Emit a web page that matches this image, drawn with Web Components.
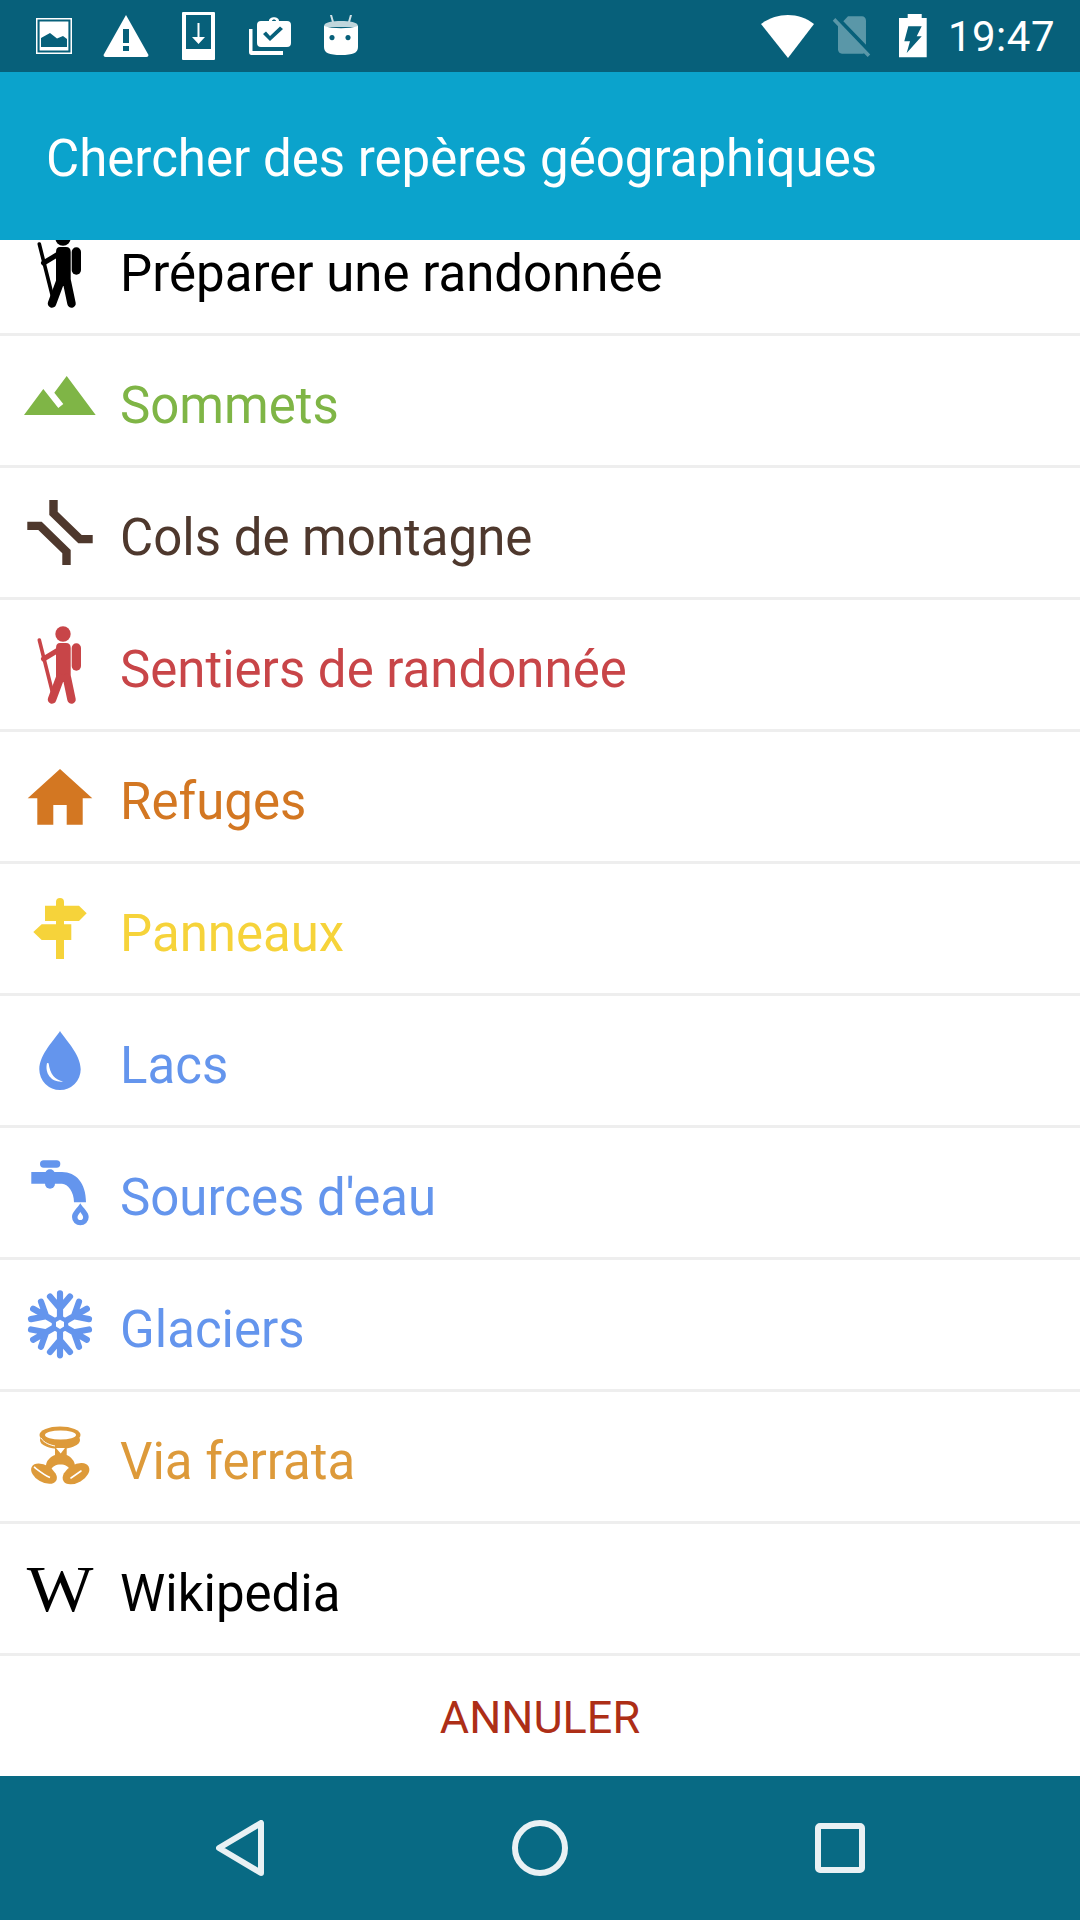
<!DOCTYPE html>
<html>
<head>
<meta charset="utf-8">
<title>Chercher des repères géographiques</title>
<style>
  html, body { margin: 0; padding: 0; }
  body { width: 1080px; height: 1920px; overflow: hidden; background: #fff; font-family: Roboto, "Liberation Sans", sans-serif; }
  phone-screen { height: 1920px; }
</style>
</head>
<body>
<script>
const hiker = `
  <circle cx="63" cy="34" r="7.7"/>
  <path d="M39.3 40 L52.7 93.3" stroke="currentColor" stroke-width="3.6" stroke-linecap="round" fill="none"/>
  <path d="M60 49 L43.5 59" stroke="currentColor" stroke-width="5" stroke-linecap="round" fill="none"/>
  <path d="M60 43 H66 Q70.7 43 70.7 48 V82 H56 V48 Q56 43 60 43 Z"/>
  <path d="M60 78 L52 99.5 M67 78 L71.5 99.5" stroke="currentColor" stroke-width="8.5" stroke-linecap="round" fill="none"/>
  <rect x="71.7" y="43.3" width="9.3" height="27.4" rx="4.6"/>`;

const arm = `<g><path d="M0 0 V-31 M-10 -27.7 L0 -16 L10 -27.7" stroke="currentColor" stroke-width="6.2" stroke-linecap="round" stroke-linejoin="round" fill="none"/></g>`;

const ICONS = {
  hiker,
  peak: `<path d="M24 79 L43.3 53 L58.3 72 L63.3 68 L54.3 56.7 L66.7 40 L95.7 79 Z"/>`,
  pass: `<path d="M49.3 32 H57.7 V43.7 L81.7 67 H92.7 V75.3 H78.3 L49.3 47 Z"/>
         <path d="M27.3 53.7 H41.7 L70.7 82 V97 H62.3 V85.3 L38.3 62 H27.3 Z"/>`,
  hut: `<path d="M60 37 L92.3 66.3 H82.7 V92.7 H66.7 V73 H53.3 V92.7 H37.3 V66.3 H27.7 Z"/>`,
  sign: `<path d="M56 38 A4 4 0 0 1 64 38 V41.7 H79 L86.7 49.3 L79 57 H64 V60.3 H71.3 V76 H64 V95 H56 V76 H41.7 L33.3 68 L41.7 60.3 H56 V57 H45 V41.7 H56 Z"/>`,
  drop: `<path d="M60 35 C64 42 80.7 58 80.7 73.3 A20.7 20.7 0 0 1 39.3 73.3 C39.3 58 56 42 60 35 Z"/>
         <path fill="#fff" d="M47 67 C44.5 78 52 87 63.5 85.5 C55 84 50 78 48.6 67.2 Z"/>`,
  tap: `<rect x="40" y="32.3" width="20.3" height="7.4" rx="3.7"/>
        <rect x="45" y="41.3" width="10" height="19.4" rx="5"/>
        <path d="M31.3 44 H62 C76 44 86 55 86 74.3 H74 C74 64 68 55.7 62 55.7 H31.3 Z"/>
        <path fill-rule="evenodd" d="M80.3 75.3 C83 80 88.7 84 88.7 89 A8.3 8.3 0 0 1 72 89 C72 84 77.6 80 80.3 75.3 Z M80.3 84 C79 86 77.5 87.5 77.5 89.3 A2.8 2.8 0 0 0 83.1 89.3 C83.1 87.5 81.6 86 80.3 84 Z"/>`,
  flake: `<g transform="translate(60 64.3)">${arm}
          <g transform="rotate(60)">${arm}</g><g transform="rotate(120)">${arm}</g>
          <g transform="rotate(180)">${arm}</g><g transform="rotate(240)">${arm}</g><g transform="rotate(300)">${arm}</g>
          <path d="M0 -9.5 L8.2 -4.75 V4.75 L0 9.5 L-8.2 4.75 V-4.75 Z"/>
          <path fill="#fff" d="M0 -4.6 L4 -2.3 V2.3 L0 4.6 L-4 2.3 V-2.3 Z"/></g>`,
  harness: `<ellipse cx="60" cy="43" rx="20.5" ry="8.500"/><ellipse cx="60" cy="48" rx="20" ry="9"/>
    <ellipse cx="60.500" cy="43" rx="15.500" ry="4.500" fill="#fff"/>
    <path d="M41 46 C44 51 50 53 55 54" stroke="#fff" stroke-width="1" fill="none"/>
    <path d="M55 52 H66.700 V63 C71 65 75 69 75 74 L70 78 C69 74.500 65 72.500 60.500 72.500 C56 72.500 52 74.500 51 78 L46 74 C46 69 50 65 55 63 Z"/>
    <path d="M56 56 H65 L60.700 61.500 Z" fill="#fff"/>
    <ellipse cx="44" cy="81.700" rx="14" ry="8.500" transform="rotate(30 44 81.700)"/>
    <path d="M34 75 C38 78 44 83 50 85.500" stroke="#fff" stroke-width="1.600" fill="none"/>
    <ellipse cx="76" cy="81.700" rx="14.500" ry="9" transform="rotate(-30 76 81.700)"/>
    <path d="M71 86 L81 79" stroke="#fff" stroke-width="1.600" stroke-linecap="round" fill="none"/>`
};

class StatusBar extends HTMLElement {
  constructor() {
    super();
    this.attachShadow({ mode: 'open' });
    this.shadowRoot.innerHTML = `
      <style>
        :host { display: flex; align-items: center; height: 72px; background: #07607a; color: #fff; padding: 0 25px 0 36px; box-sizing: border-box; flex: none; }
        svg { display: block; fill: #fff; flex: none; }
        .left { display: flex; align-items: center; }
        .right { margin-left: auto; display: flex; align-items: center; }
        .time { font: 400 42px Roboto, sans-serif; margin-left: 21px; letter-spacing: .5px; }
      </style>
      <div class="left">
        <svg width="36" height="36" viewBox="0 0 36 36" style="margin-right:31px"><path fill-rule="evenodd" d="M0 0 H36 V36 H0 Z M1.500 1.500 V34.500 H34.500 V1.500 Z M3.600 3.600 H32.400 V32.400 H3.600 Z M5 29 H31 V21 L27 18 L21 20.500 L14 15 L5 20 Z"/></svg>
        <svg width="46" height="42" viewBox="0 0 46 42" style="margin-right:33px"><path fill-rule="evenodd" d="M23 0 L45.500 40 Q45.500 42 43.500 42 H2.500 Q.5 42 .5 40 Z M20 14 V28 H26 V14 Z M20 31 V36 H26 V31 Z"/></svg>
        <svg width="33" height="48" viewBox="0 0 33 48" style="margin-right:34px"><path fill-rule="evenodd" d="M1 0 H32 Q33 0 33 1 V47 Q33 48 32 48 H1 Q0 48 0 47 V1 Q0 0 1 0 Z M4 3 V37 H29 V3 Z M15.500 11 V25 H10 L16.500 32 L23 25 H17.500 V11 Z"/></svg>
        <svg width="44" height="42" viewBox="0 0 44 42" style="margin-right:30px"><path d="M0 14 H3.500 V36 H34 V40 H2.500 Q0 40 0 37 Z"/><path fill-rule="evenodd" d="M12 6 H20 C20 1 30 1 30 6 H38 Q42 6 42 10 V28 Q42 32 38 32 H12 Q8 32 8 28 V10 Q8 6 12 6 Z M23 6 H27 C27 4 23 4 23 6 Z M14 19 L21 26 L34 14 L31 11.500 L21 21 L17 16.500 Z"/></svg>
        <svg width="36" height="42" viewBox="0 0 36 42"><path d="M8 0 L10 7 M28 0 L26 7" stroke="#cfe0e5" stroke-width="2" stroke-linecap="round"/><path d="M18 6 C26 6 35 7 35 11 V12 H1 V11 C1 7 10 6 18 6 Z" fill="#c0d6dc"/><path fill-rule="evenodd" d="M1 11 C10 14 26 14 35 11 V32 C35 38 30 40 18 40 C6 40 1 38 1 32 Z M9 20 A2.600 2.600 0 1 0 9.010 20 Z M25 20 A2.600 2.600 0 1 0 25.010 20 Z"/></svg>
      </div>
      <div class="right">
        <svg width="54" height="43" viewBox="0 0 54 43" style="margin-right:13px"><path d="M0 9 C16 -3 38 -3 53 9 L27 43 Z"/></svg>
        <svg width="48" height="50" viewBox="0 0 24 24" preserveAspectRatio="none" style="margin-right:23px;margin-top:-2px"><path fill="#5a97a8" d="M18.99 5c0-1.100-.89-2-1.990-2h-7L7.660 5.340 19 16.680 18.990 5zM3.650 3.880L2.380 5.150 5 7.770V19c0 1.100.9 2 2 2h10.010c.35 0 .67-.1.96-.26l1.880 1.880 1.270-1.270L3.650 3.880z"/></svg>
        <svg width="28" height="44" viewBox="0 0 28 44"><path fill-rule="evenodd" d="M8.700 0 H22.700 V4 H27.700 V43.300 H0 V4 H8.700 Z M9.300 12.300 L5.300 27.300 H11 L7.700 39 L22.700 22.300 H17.700 L22.700 12.300 Z"/></svg>
        <span class="time">19:47</span>
      </div>`;
  }
}

class AppBar extends HTMLElement {
  constructor() {
    super();
    this.attachShadow({ mode: 'open' });
    this.shadowRoot.innerHTML = `
      <style>
        :host { display: flex; align-items: center; height: 168px; background: #0ba3cc; color: #fff; padding: 5px 0 0 46px; box-sizing: border-box; flex: none; font: 400 51px Roboto, sans-serif; }
      </style>
      <slot></slot>`;
  }
}

class PoiList extends HTMLElement {
  constructor() {
    super();
    this.attachShadow({ mode: 'open' });
    this.shadowRoot.innerHTML = `
      <style>
        :host { display: block; flex: 1; min-height: 0; overflow: hidden; background: #fff; }
        .scroll { margin-top: -36px; }
      </style>
      <div class="scroll"><slot></slot></div>`;
  }
}

class PoiRow extends HTMLElement {
  constructor() {
    super();
    this.attachShadow({ mode: 'open' });
  }

  // attributes are not there yet in the constructor when the parser creates the element
  connectedCallback() {
    const icon = this.getAttribute('icon');
    const glyph = icon === 'wiki'
      ? `<span class="w">W</span>`
      : `<svg width="120" height="129" viewBox="0 0 120 129" fill="currentColor">${ICONS[icon]}</svg>`;
    this.shadowRoot.innerHTML = `
      <style>
        :host { display: flex; align-items: center; height: 132px; box-sizing: border-box; border-bottom: 3px solid #eeeeee; color: var(--c, #000); font: 400 51px Roboto, sans-serif; }
        .icon { width: 120px; height: 129px; flex: none; display: flex; align-items: center; justify-content: center; }
        svg { display: block; }
        .w { font: 400 66px "Liberation Serif", serif; color: #000; line-height: 1; transform: scaleX(1.07); }
        .label { padding-top: 9px; }
      </style>
      <div class="icon">${glyph}</div>
      <div class="label"><slot></slot></div>`;
  }
}

class CancelBar extends HTMLElement {
  constructor() {
    super();
    this.attachShadow({ mode: 'open' });
    this.shadowRoot.innerHTML = `
      <style>
        :host { display: flex; align-items: center; justify-content: center; height: 120px; padding-top: 2px; box-sizing: border-box; flex: none; background: #fff; color: #ad2e17; font: 400 45px Roboto, sans-serif; }
      </style>
      <slot></slot>`;
  }
}

class NavBar extends HTMLElement {
  constructor() {
    super();
    this.attachShadow({ mode: 'open' });
    this.shadowRoot.innerHTML = `
      <style>
        :host { display: block; height: 144px; flex: none; background: #086a84; }
        .row { display: grid; grid-template-columns: 1fr 1fr 1fr; height: 100%; width: 900px; margin: 0 auto; place-items: center; }
        svg { display: block; fill: none; stroke: #e9f1f4; stroke-width: 6; stroke-linejoin: round; }
      </style>
      <div class="row">
        <svg width="48" height="56" viewBox="0 0 48 56"><path d="M45 3 V53 L3 28 Z"/></svg>
        <svg width="56" height="56" viewBox="0 0 56 56"><circle cx="28" cy="28" r="25"/></svg>
        <svg width="50" height="50" viewBox="0 0 50 50"><rect x="3" y="3" width="44" height="44" rx="2"/></svg>
      </div>`;
  }
}

class PhoneScreen extends HTMLElement {
  constructor() {
    super();
    this.attachShadow({ mode: 'open' });
    this.shadowRoot.innerHTML = `
      <style>
        :host { display: flex; flex-direction: column; width: 1080px; height: 1920px; overflow: hidden; }
      </style>
      <slot></slot>`;
  }
}

customElements.define('status-bar', StatusBar);
customElements.define('app-bar', AppBar);
customElements.define('poi-list', PoiList);
customElements.define('poi-row', PoiRow);
customElements.define('cancel-bar', CancelBar);
customElements.define('nav-bar', NavBar);
customElements.define('phone-screen', PhoneScreen);
</script>

<phone-screen>
  <status-bar></status-bar>
  <app-bar>Chercher des repères géographiques</app-bar>
  <poi-list>
    <poi-row icon="hiker" style="--c:#000">Préparer une randonnée</poi-row>
    <poi-row icon="peak" style="--c:#7fb546">Sommets</poi-row>
    <poi-row icon="pass" style="--c:#4e382d">Cols de montagne</poi-row>
    <poi-row icon="hiker" style="--c:#c84548">Sentiers de randonnée</poi-row>
    <poi-row icon="hut" style="--c:#d37722">Refuges</poi-row>
    <poi-row icon="sign" style="--c:#f6d33a">Panneaux</poi-row>
    <poi-row icon="drop" style="--c:#6495ed">Lacs</poi-row>
    <poi-row icon="tap" style="--c:#6495ed">Sources d'eau</poi-row>
    <poi-row icon="flake" style="--c:#6495ed">Glaciers</poi-row>
    <poi-row icon="harness" style="--c:#dd9a3a">Via ferrata</poi-row>
    <poi-row icon="wiki" style="--c:#000">Wikipedia</poi-row>
  </poi-list>
  <cancel-bar>ANNULER</cancel-bar>
  <nav-bar></nav-bar>
</phone-screen>
</body>
</html>
